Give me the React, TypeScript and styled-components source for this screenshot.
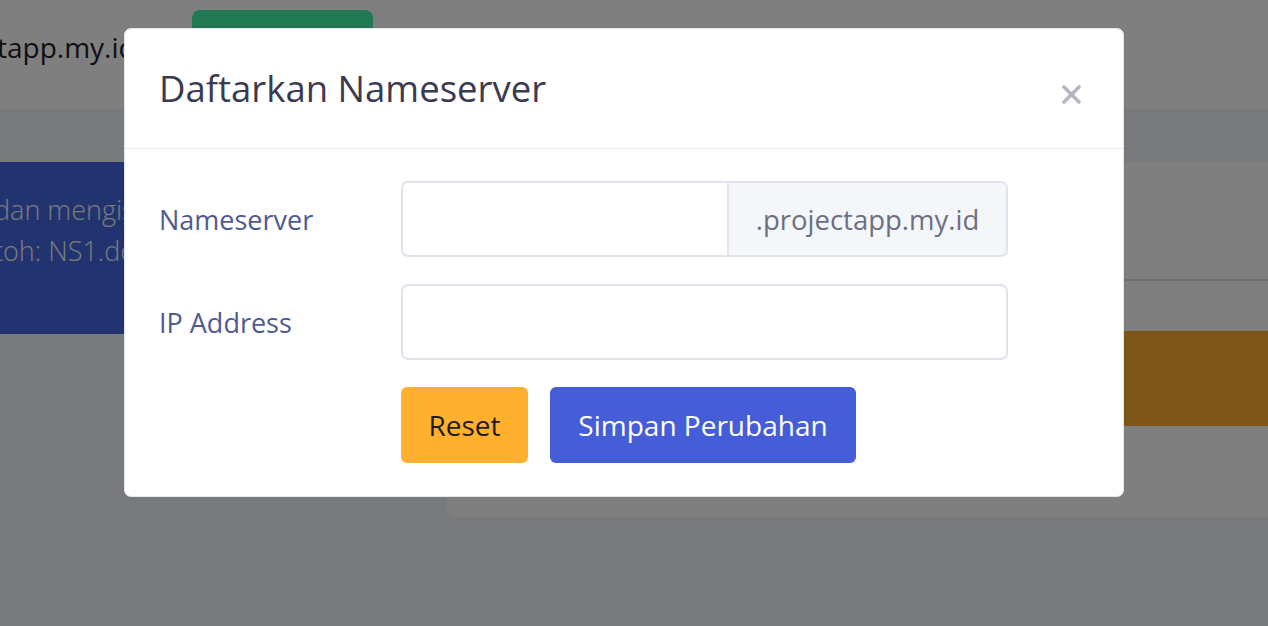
import React from "react";
import styled, { createGlobalStyle } from "styled-components";

const Global = createGlobalStyle`
  html, body {
    margin: 0;
    padding: 0;
    width: 1268px;
    height: 626px;
    overflow: hidden;
    background: #f2f4fc;
    font-family: "Open Sans", "Liberation Sans", sans-serif;
  }
  * { box-sizing: border-box; }
`;

const Page = styled.div`
  width: 1268px;
  height: 626px;
  display: flex;
  flex-direction: column;
  background: #f2f4fc;
`;

const TopBar = styled.header`
  height: 109px;
  background: #ffffff;
  display: flex;
  align-items: flex-start;
  flex-shrink: 0;
`;

const Brand = styled.div`
  width: 192px;
  height: 94px;
  display: flex;
  align-items: center;
  font-size: 28px;
  font-weight: 500;
  color: #1e1e24;
  white-space: nowrap;
  overflow: hidden;
`;

const BrandText = styled.span`
  margin-left: -3px;
`;

const GreenButton = styled.div`
  margin-top: 10px;
  width: 181px;
  height: 60px;
  border-radius: 8px;
  background: #42f3a9;
`;

const Main = styled.main`
  display: flex;
  align-items: flex-start;
  gap: 27px;
  padding-top: 53px;
`;

const Banner = styled.section`
  width: 420px;
  height: 172px;
  flex-shrink: 0;
  background: #4468de;
  padding-top: 27px;
  color: #f4f4f6;
  font-size: 27px;
  font-weight: 300;
  line-height: 41px;
  white-space: nowrap;
  overflow: hidden;
`;

const BannerLine = styled.div`
  margin-left: -6px;
`;

const Card = styled.section`
  width: 860px;
  height: 355px;
  flex-shrink: 0;
  background: #ffffff;
  border-radius: 8px;
  display: flex;
  flex-direction: column;
`;

const CardHead = styled.div`
  height: 119px;
  border-bottom: 2px solid #dee0ea;
`;

const CardBody = styled.div`
  padding: 50px 0 0 30px;
`;

const OrangeBlock = styled.div`
  height: 95px;
  background: #ffac34;
  border-radius: 6px 0 0 6px;
`;

const Overlay = styled.div`
  position: fixed;
  inset: 0;
  background: rgba(0, 0, 0, 0.5);
  display: flex;
  align-items: flex-start;
`;

const Dialog = styled.div`
  margin: 28px 0 0 124px;
  width: 1000px;
  background: #ffffff;
  border: 1px solid #e3e6ec;
  border-radius: 7px;
  font-family: "Open Sans", "Liberation Sans", sans-serif;
`;

const DialogHeader = styled.div`
  height: 120px;
  padding: 0 42px 0 34px;
  border-bottom: 1px solid #e5e8ee;
  display: flex;
  align-items: center;
  justify-content: space-between;
`;

const Title = styled.h2`
  margin: 0 0 2px;
  font-size: 36.5px;
  font-weight: 500;
  color: #3b3a51;
`;

const CloseButton = styled.button`
  margin-top: 11px;
  width: 19px;
  height: 19px;
  padding: 0;
  border: 0;
  background: transparent;
  display: flex;
  cursor: pointer;
`;

const DialogBody = styled.div`
  padding: 32px 34px 33px;
  display: flex;
  flex-direction: column;
  gap: 27px;
`;

const Row = styled.div`
  display: grid;
  grid-template-columns: 242px 607px;
  align-items: center;
`;

const Label = styled.label`
  font-size: 27px;
  color: #4f5b8f;
  font-weight: 400;
`;

const InputGroup = styled.div`
  height: 76px;
  border: 2px solid #e0e3eb;
  border-radius: 7px;
  display: flex;
  overflow: hidden;
`;

const TextInput = styled.input<{ $grow?: boolean }>`
  border: 0;
  outline: none;
  height: 100%;
  padding: 0 20px;
  font-size: 27px;
  font-family: inherit;
  background: transparent;
  ${(p) => (p.$grow ? "flex: 1;" : "width: 324px;")}
`;

const Addon = styled.span`
  flex: 1;
  border-left: 2px solid #e0e3eb;
  background: #f5f6fa;
  display: flex;
  align-items: center;
  justify-content: center;
  font-size: 27.5px;
  color: #6c6f82;
`;

const Actions = styled.div`
  display: flex;
  gap: 22px;
  margin-left: 242px;
`;

const Button = styled.button<{ $variant: "warning" | "primary" }>`
  height: 76px;
  border: 0;
  border-radius: 6px;
  font-family: inherit;
  font-size: 28px;
  font-weight: 400;
  cursor: pointer;
  padding: 0;
  width: ${(p) => (p.$variant === "warning" ? "127px" : "306px")};
  background: ${(p) => (p.$variant === "warning" ? "#ffb02e" : "#465dd8")};
  color: ${(p) => (p.$variant === "warning" ? "#1c1c1c" : "#ffffff")};
`;

export default function App() {
  return (
    <>
      <Global />
      <Page>
        <TopBar>
          <Brand>
            <BrandText>tapp.my.id</BrandText>
          </Brand>
          <GreenButton />
        </TopBar>
        <Main>
          <Banner>
            <BannerLine>dan mengisi</BannerLine>
            <BannerLine>toh: NS1.do</BannerLine>
          </Banner>
          <Card>
            <CardHead />
            <CardBody>
              <OrangeBlock />
            </CardBody>
          </Card>
        </Main>
      </Page>
      <Overlay>
        <Dialog role="dialog" aria-labelledby="ns-title">
          <DialogHeader>
            <Title id="ns-title">Daftarkan Nameserver</Title>
            <CloseButton aria-label="Close">
              <svg width="19" height="19" viewBox="0 0 19 19">
                <path
                  d="M2 2 L17 17 M17 2 L2 17"
                  stroke="#b5b6c2"
                  strokeWidth="3.6"
                  strokeLinecap="round"
                />
              </svg>
            </CloseButton>
          </DialogHeader>
          <DialogBody>
            <Row>
              <Label>Nameserver</Label>
              <InputGroup>
                <TextInput type="text" />
                <Addon>.projectapp.my.id</Addon>
              </InputGroup>
            </Row>
            <Row>
              <Label>IP Address</Label>
              <InputGroup>
                <TextInput type="text" $grow />
              </InputGroup>
            </Row>
            <Actions>
              <Button $variant="warning">Reset</Button>
              <Button $variant="primary">Simpan Perubahan</Button>
            </Actions>
          </DialogBody>
        </Dialog>
      </Overlay>
    </>
  );
}
